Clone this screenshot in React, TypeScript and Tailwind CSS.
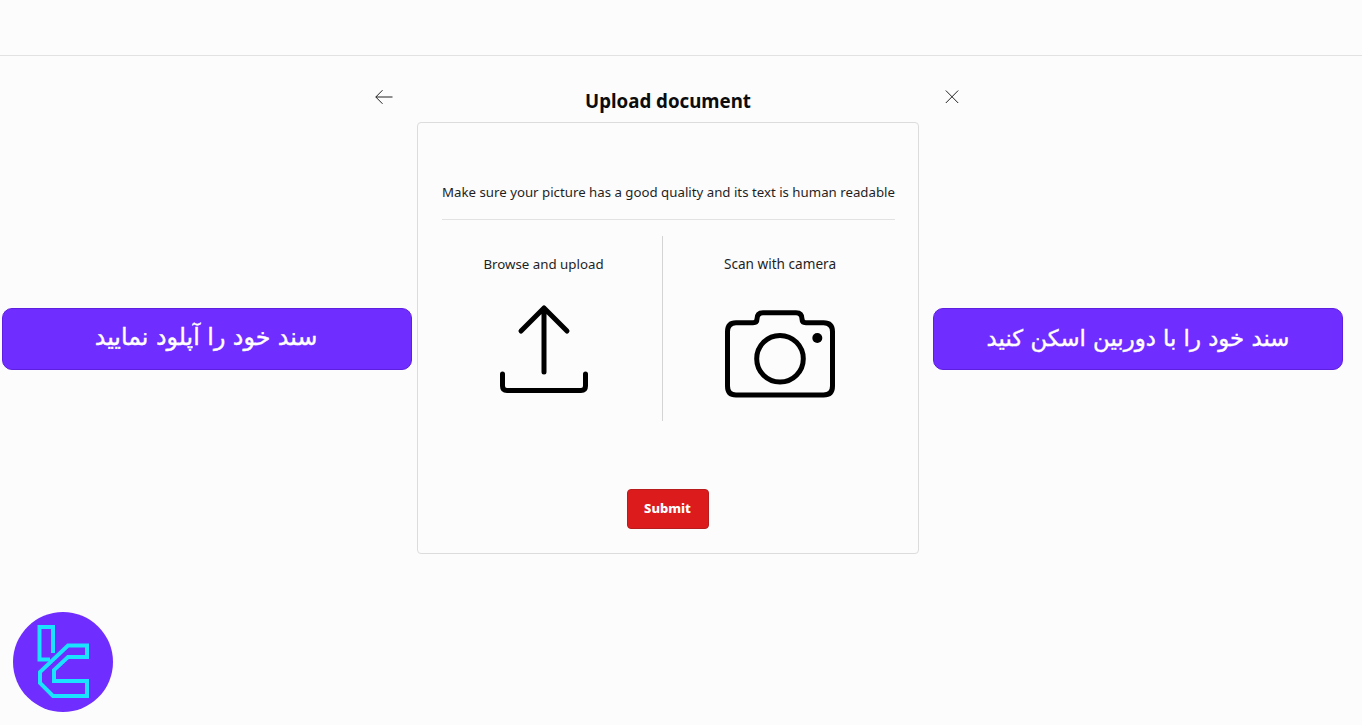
export default function App() {
  return (
    <div className="relative min-h-[725px] overflow-hidden bg-[#fcfcfc] text-[#1f1f1f] font-['Noto_Sans','Liberation_Sans',sans-serif]">
      <header className="h-[56px] border-b border-[#e2e2e2]" />
      <main className="ml-[368px] w-[600px]">
        <div className="flex h-[66px] items-start justify-between px-[7px] pt-[33px]">
          <svg width="18" height="16" viewBox="0 0 18 16" fill="none" stroke="#222" strokeWidth="1">
            <path d="M17.500 8H.8M7.500 1.200.8 8l6.700 6.800" />
          </svg>
          <h1 className="-mt-[1px] mr-[2px] text-[18.7px] font-bold leading-[26px] text-[#0c0c0c]">Upload document</h1>
          <svg className="mr-[2px]" width="14" height="16" viewBox="0 0 14 16" fill="none" stroke="#222" strokeWidth="1">
            <path d="M.8 1.500 13.200 14M13.200 1.500.8 14" />
          </svg>
        </div>
        <section className="ml-[49px] h-[432px] w-[502px] rounded border border-[#dcdcdc] pl-[24px] pr-[23px] pt-[60px]">
          <p className="whitespace-nowrap border-b border-[#e2e2e2] pb-[17px] text-center text-[13.25px] leading-[19px]">
            Make sure your picture has a good quality and its text is human readable
          </p>
          <div className="mt-[16px] flex h-[185px]">
            <div className="flex w-[221px] flex-col items-center border-r border-[#d4d4d4] pr-[17px]">
              <span className="mt-[19px] text-[13.3px] leading-[18px]">Browse and upload</span>
              <svg className="mt-[30px]" width="92" height="92" viewBox="0 0 92 92" fill="none" stroke="#000" strokeWidth="5" strokeLinecap="round" strokeLinejoin="round">
                <path d="M46 5v64M23 28 46 5l23 23" />
                <path d="M4.500 71v12q0 4.500 4.500 4.500h74q4.500 0 4.500-4.500V71" />
              </svg>
            </div>
            <div className="flex flex-1 flex-col items-center pl-[2px]">
              <span className="mt-[19px] text-[13.6px] leading-[18px]">Scan with camera</span>
              <svg className="mt-[37px]" width="110" height="92" viewBox="0 0 110 92" fill="none" stroke="#000" strokeWidth="5" strokeLinejoin="round">
                <path d="M11 12.700h17q4 0 4-4V9q0-6.300 6-6.300h33q6 0 6 6.300v-.300q0 4 4 4h17.500q9 0 9 9V76q0 9-9 9H11q-8.500 0-8.500-9V21.700q0-9 8.500-9Z" />
                <circle cx="55" cy="48.700" r="23.300" />
                <circle cx="92.300" cy="28" r="5" fill="#000" stroke="none" />
              </svg>
            </div>
          </div>
          <div className="mt-[68px] flex justify-center pr-[2px]">
            <button className="h-[40px] w-[82px] rounded border border-[#b91c1c] bg-[#dc1c1c] text-[13px] font-extrabold text-white">Submit</button>
          </div>
        </section>
      </main>

      <div dir="rtl" className="absolute left-[2px] top-[308px] flex h-[62px] w-[410px] items-center justify-center rounded-[10px] border border-[#5f1fe0] bg-[#6f2dff] pb-[2px] pr-[2px] text-[23.7px] font-medium text-white [-webkit-text-stroke:0.4px_white] font-['DejaVu_Sans',sans-serif]">
        سند خود را آپلود نمایید
      </div>
      <div dir="rtl" className="absolute left-[933px] top-[308px] flex h-[62px] w-[410px] items-center justify-center rounded-[10px] border border-[#5f1fe0] bg-[#6f2dff] pb-[2px] text-[22.8px] font-medium text-white [-webkit-text-stroke:0.4px_white] font-['DejaVu_Sans',sans-serif]">
        سند خود را با دوربین اسکن کنید
      </div>

      <svg className="absolute left-0 top-[600px]" width="130" height="125" viewBox="0 0 130 125">
        <circle cx="63" cy="62" r="50" fill="#6f2dff" />
        <g fill="none" stroke="#19e3ff" strokeWidth="4">
          <path d="M53 53V27H39.500v32.500H50" />
          <path d="M87 45.500H68L40 72v11l13 13h34V81H54V70l14-13h19Z" />
        </g>
      </svg>
    </div>
  );
}
